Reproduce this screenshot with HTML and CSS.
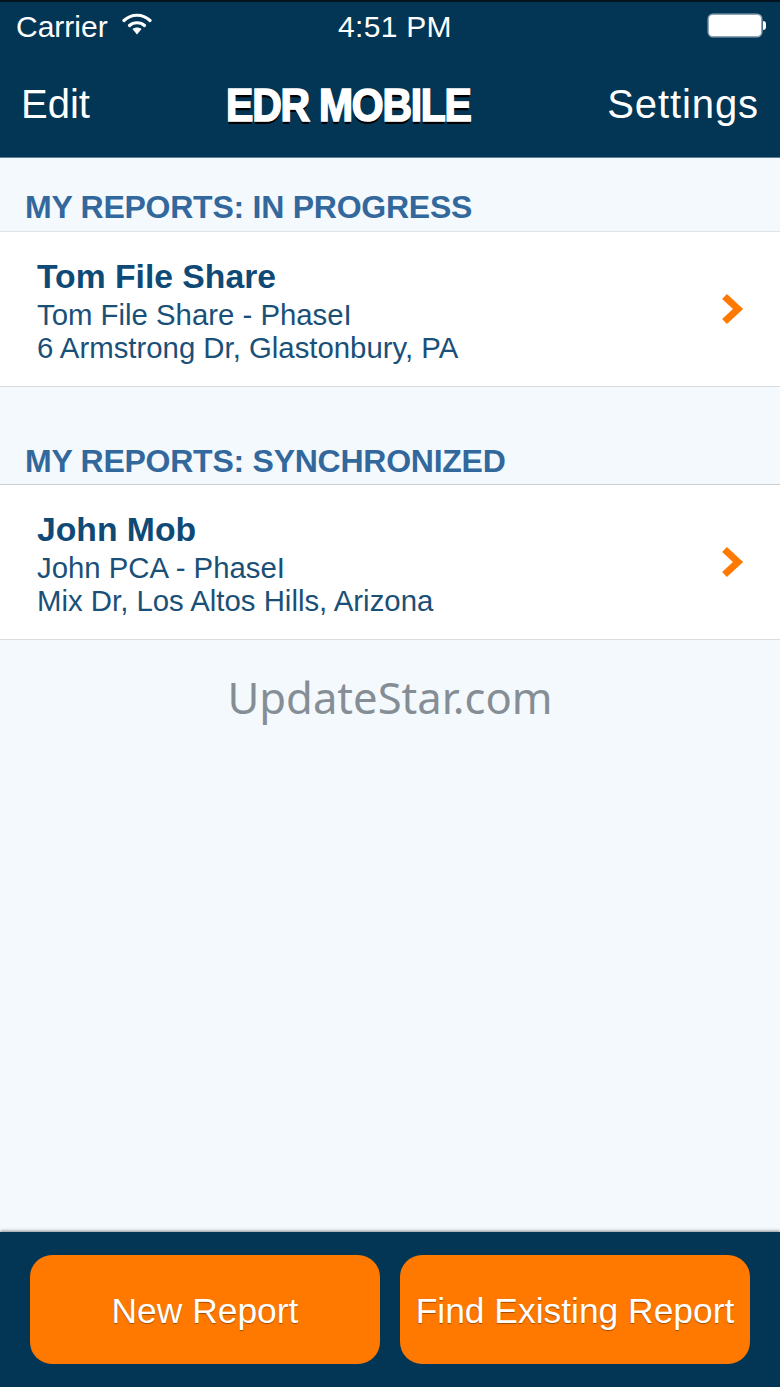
FILE: index.html
```html
<!DOCTYPE html>
<html lang="en">
<head>
<meta charset="utf-8">
<title>EDR Mobile</title>
<link rel="stylesheet" href="styles.css">
</head>
<body>
<div class="app">
  <header class="top">
    <div class="status">
      <div class="status-left">
        <span>Carrier</span>
        <svg class="wifi" width="30" height="24" viewBox="0 0 30 24" aria-hidden="true">
          <path d="M2 8.5 C9.5 1.5 20.5 1.5 28 8.5" fill="none" stroke="#fff" stroke-width="3.2" stroke-linecap="round"/>
          <path d="M7.5 13.5 C11.5 9.8 18.5 9.8 22.5 13.5" fill="none" stroke="#fff" stroke-width="3.2" stroke-linecap="round"/>
          <path d="M10.5 17 C13 15 17 15 19.5 17 L15 22.5 Z" fill="#fff"/>
        </svg>
      </div>
      <span class="clock">4:51 PM</span>
      <div class="battery"><span class="battery-body"></span><span class="battery-tip"></span></div>
    </div>
    <nav class="nav">
      <span class="nav-btn">Edit</span>
      <span class="title">EDR MOBILE</span>
      <span class="nav-btn nav-btn-wide">Settings</span>
    </nav>
  </header>
  <main class="content">
    <section class="group">
      <h2 class="group-label">MY REPORTS: IN PROGRESS</h2>
      <div class="row">
        <div class="row-text">
          <div class="row-name">Tom File Share</div>
          <div class="row-line">Tom File Share - PhaseI</div>
          <div class="row-line">6 Armstrong Dr, Glastonbury, PA</div>
        </div>
        <svg class="chev" width="24" height="32" viewBox="0 0 24 32" aria-hidden="true"><path d="M4.5 3.5 L18 16 L4.5 28.5" fill="none" stroke="#ff7900" stroke-width="7" stroke-linejoin="miter"/></svg>
      </div>
    </section>
    <section class="group">
      <h2 class="group-label">MY REPORTS: SYNCHRONIZED</h2>
      <div class="row">
        <div class="row-text">
          <div class="row-name">John Mob</div>
          <div class="row-line">John PCA - PhaseI</div>
          <div class="row-line">Mix Dr, Los Altos Hills, Arizona</div>
        </div>
        <svg class="chev" width="24" height="32" viewBox="0 0 24 32" aria-hidden="true"><path d="M4.5 3.5 L18 16 L4.5 28.5" fill="none" stroke="#ff7900" stroke-width="7" stroke-linejoin="miter"/></svg>
      </div>
    </section>
    <div class="watermark">UpdateStar.com</div>
  </main>
  <footer class="bottom">
    <button class="action">New Report</button>
    <button class="action">Find Existing Report</button>
  </footer>
</div>
</body>
</html>
```
FILE: styles.css
```css
* { box-sizing: border-box; }
html, body { margin: 0; padding: 0; }
body { font-family: "Liberation Sans", Arial, sans-serif; background: #f4f9fe; }
.app { width: 780px; height: 1387px; display: flex; flex-direction: column; overflow: hidden; }
.top { background: #033655; border-top: 2px solid #04141f; height: 158px; flex: none; color: #fff; border-bottom: 1px solid #5f7f95; }
.status { height: 50px; display: flex; justify-content: space-between; align-items: center; padding: 0 14px 0 16px; font-size: 30px; }
.status-left { display: flex; align-items: center; gap: 14px; width: 148px; }
.wifi { margin-top: -6px; }
.clock { font-size: 30px; letter-spacing: 0.3px; margin-left: 8px; }
.battery { display: flex; align-items: center; width: 148px; justify-content: flex-end; margin-top: -3px; }
.battery-body { width: 52px; height: 21px; background: #fff; border-radius: 4px; box-shadow: 0 0 0 1.5px #8fa5b6; }
.battery-tip { width: 3px; height: 9px; background: #fff; border-radius: 0 3px 3px 0; margin-left: 2px; }
.nav { height: 105px; display: flex; justify-content: space-between; align-items: center; padding: 0 22px 0 21px; }
.nav-btn { font-size: 40px; font-weight: 400; }
.nav-btn-wide { letter-spacing: 0.9px; margin-right: -1px; }
.title { font-size: 46px; font-weight: 700; letter-spacing: -1.4px; -webkit-text-stroke: 1.7px #fff; text-shadow: 0 3px 0 #000; transform: scaleX(0.89); display: inline-block; }
.content { flex: 1; }
.group-label { margin: 0; height: 74px; padding: 29px 0 0 25px; font-size: 32px; line-height: 40px; font-weight: 700; letter-spacing: -0.25px; color: #33689c; border-bottom: 1px solid #dfe4e9; }
.group + .group .group-label { height: 98px; padding-top: 54px; border-bottom-color: #c9ced3; }
.row { height: 155px; background: #fff; border-bottom: 1px solid #d9dcdf; display: flex; justify-content: space-between; align-items: center; padding: 0 36px 0 37px; }
.row-text { padding-top: 2px; }
.row-name { font-size: 33.7px; line-height: 38px; font-weight: 700; color: #0f4a76; margin-bottom: 3px; }
.row-line { font-size: 29.35px; line-height: 33px; color: #1a5078; }
.watermark { text-align: center; font-family: "Noto Sans", sans-serif; font-size: 43.6px; line-height: 60px; margin-top: 27px; color: #868e95; }
.bottom { height: 155px; flex: none; background: #033655; box-shadow: 0 -1px 3px rgba(0,0,0,.45); display: flex; justify-content: space-between; align-items: center; padding: 0 30px; gap: 20px; }
.action { flex: 1; height: 109px; border: none; border-radius: 22px; background: #ff7900; color: #fff; font-family: inherit; font-size: 35.4px; padding: 3px 0 0; text-shadow: 0 1px 1px rgba(120,60,0,.7); }
```
